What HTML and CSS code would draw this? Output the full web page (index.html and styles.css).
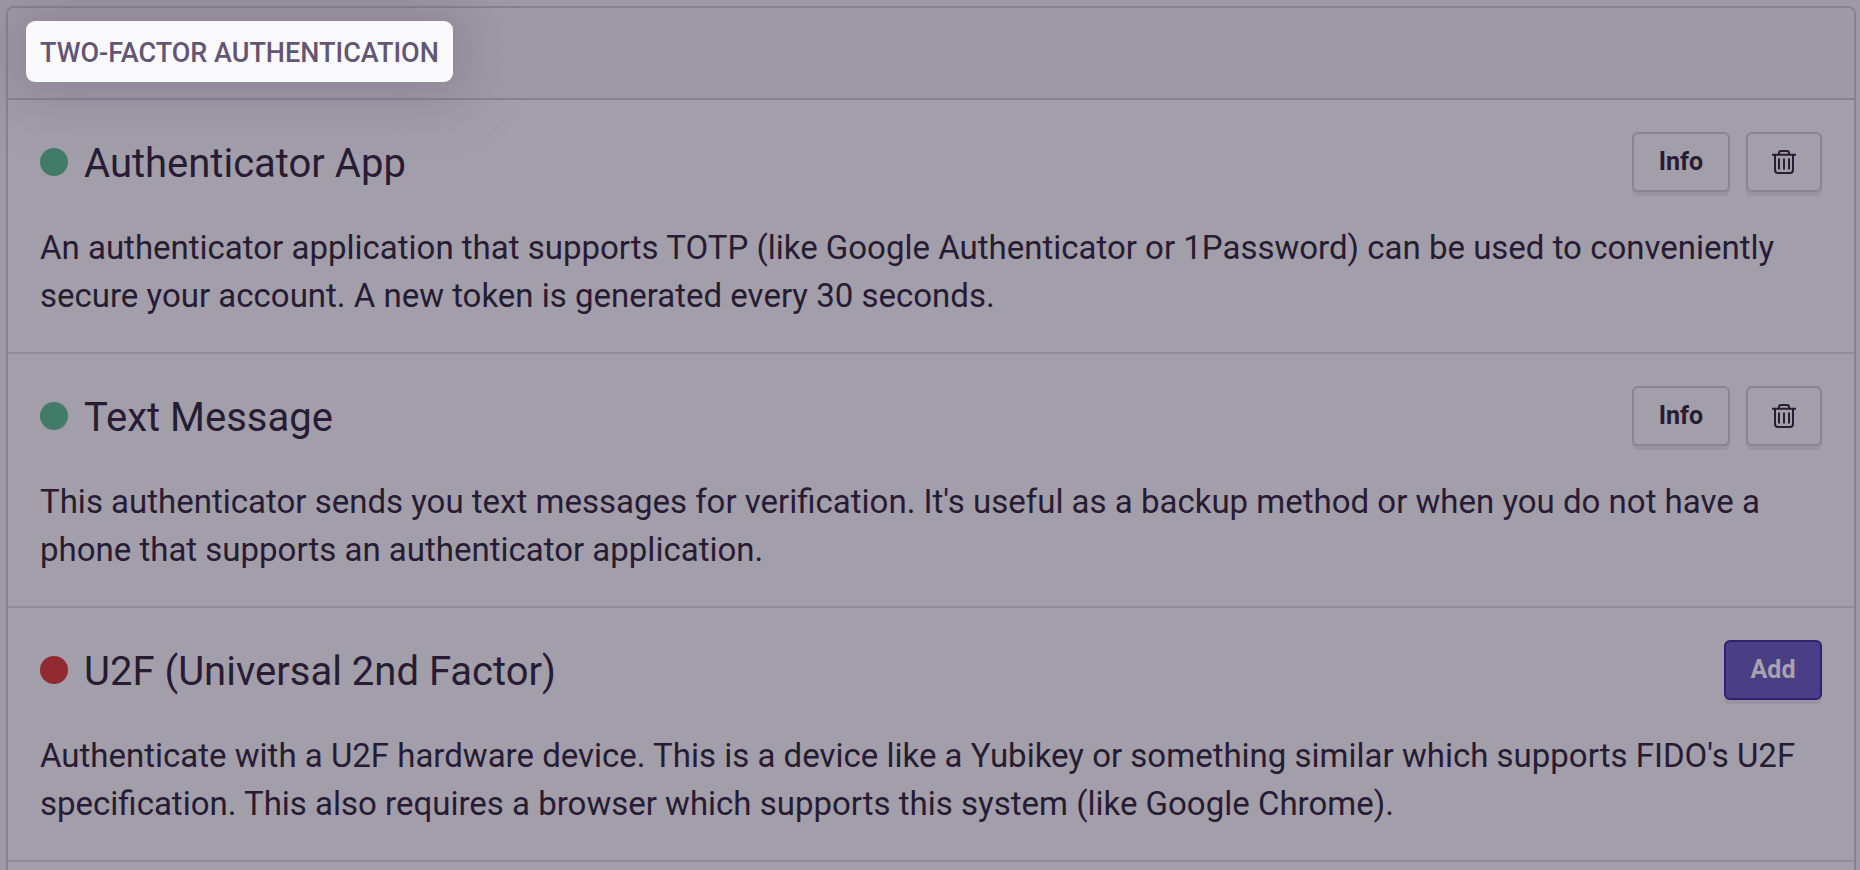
FILE: index.html
```html
<!DOCTYPE html>
<html lang="en">
<head>
<meta charset="utf-8">
<title>Two-Factor Authentication</title>
<link rel="stylesheet" href="styles.css">
</head>
<body>
<main class="panel">
  <header class="panel-header">
    <h1 class="panel-title">Two-Factor Authentication</h1>
  </header>
  <section class="method">
    <div class="method-head">
      <span class="status status-on"></span>
      <h2 class="method-name">Authenticator App</h2>
      <button class="button button-label" type="button">Info</button>
      <button class="button" type="button" aria-label="Remove Authenticator App">
        <svg class="icon" viewBox="0 0 24 24"><path d="M0 4.8H24M7 4.5V3Q7 1 9 1H15Q17 1 17 3V4.5M3 5V20Q3 23 6 23H18Q21 23 21 20V5M7 8.5V19.5M12 8.5V19.5M17 8.5V19.5"/></svg>
      </button>
    </div>
    <p class="method-text">An authenticator application that supports TOTP (like Google Authenticator or 1Password) can be used to conveniently secure your account. A new token is generated every 30 seconds.</p>
  </section>
  <section class="method">
    <div class="method-head">
      <span class="status status-on"></span>
      <h2 class="method-name">Text Message</h2>
      <button class="button button-label" type="button">Info</button>
      <button class="button" type="button" aria-label="Remove Text Message">
        <svg class="icon" viewBox="0 0 24 24"><path d="M0 4.8H24M7 4.5V3Q7 1 9 1H15Q17 1 17 3V4.5M3 5V20Q3 23 6 23H18Q21 23 21 20V5M7 8.5V19.5M12 8.5V19.5M17 8.5V19.5"/></svg>
      </button>
    </div>
    <p class="method-text">This authenticator sends you text messages for verification. It's useful as a backup method or when you do not have a phone that supports an authenticator application.</p>
  </section>
  <section class="method">
    <div class="method-head">
      <span class="status status-off"></span>
      <h2 class="method-name">U2F (Universal 2nd Factor)</h2>
      <button class="button button-label button-primary" type="button">Add</button>
    </div>
    <p class="method-text">Authenticate with a U2F hardware device. This is a device like a Yubikey or something similar which supports FIDO's U2F specification. This also requires a browser which supports this system (like Google Chrome).</p>
  </section>
</main>
</body>
</html>
```
FILE: styles.css
```css
* { box-sizing: border-box; }
html { height: 100%; }
body {
  height: 100%;
  margin: 0;
  padding: 6px 4px 0 6px;
  overflow: hidden;
  background: #9e99a5;
  color: #271c33;
  font-family: Roboto, "Liberation Sans", sans-serif;
}
h1, h2, p { margin: 0; font-weight: 400; }
.panel {
  min-height: 100%;
  border: 2px solid #878193;
  border-bottom: 0;
  border-radius: 8px 8px 0 0;
  background: #a29eaa;
}
.panel-header {
  display: flex;
  padding: 13px 18px 16px;
  border-bottom: 2px solid #878193;
  border-radius: 6px 6px 0 0;
  background: #9f9ba6;
}
.panel-title {
  padding: 4px 14px 0;
  border-radius: 9px;
  background: #fafafd;
  box-shadow: 0 0 56px 16px rgba(118, 106, 132, 0.46);
  color: #645574;
  font-size: 27px;
  font-weight: 500;
  line-height: 57px;
  text-transform: uppercase;
}
.method {
  padding: 32px;
  border-bottom: 2px solid #918b9d;
}
.method-head {
  display: flex;
  align-items: center;
  gap: 16px;
  margin-bottom: 32px;
}
.status {
  width: 28px;
  height: 28px;
  border-radius: 50%;
}
.status-on { background: #437b69; }
.status-off { background: #922b31; }
.method-name {
  flex: 1;
  padding-top: 4px;
  font-size: 40px;
  line-height: 56px;
}
.button {
  display: flex;
  align-items: center;
  justify-content: center;
  height: 60px;
  padding: 0 24px;
  border: 2px solid #898394;
  border-radius: 6px;
  background: #a29eaa;
  box-shadow: 0 4px 0 #9893a0;
  color: #271c33;
  font: 700 25px/28px Roboto, "Liberation Sans", sans-serif;
}
.button-label { min-width: 98px; }
.button-primary {
  border-color: #302070;
  background: #4a3e86;
  color: #a7a2ae;
}
.icon {
  width: 24px;
  height: 24px;
  fill: none;
  stroke: #271c33;
  stroke-width: 2;
}
.method-text {
  font-size: 33px;
  line-height: 48px;
}
```
